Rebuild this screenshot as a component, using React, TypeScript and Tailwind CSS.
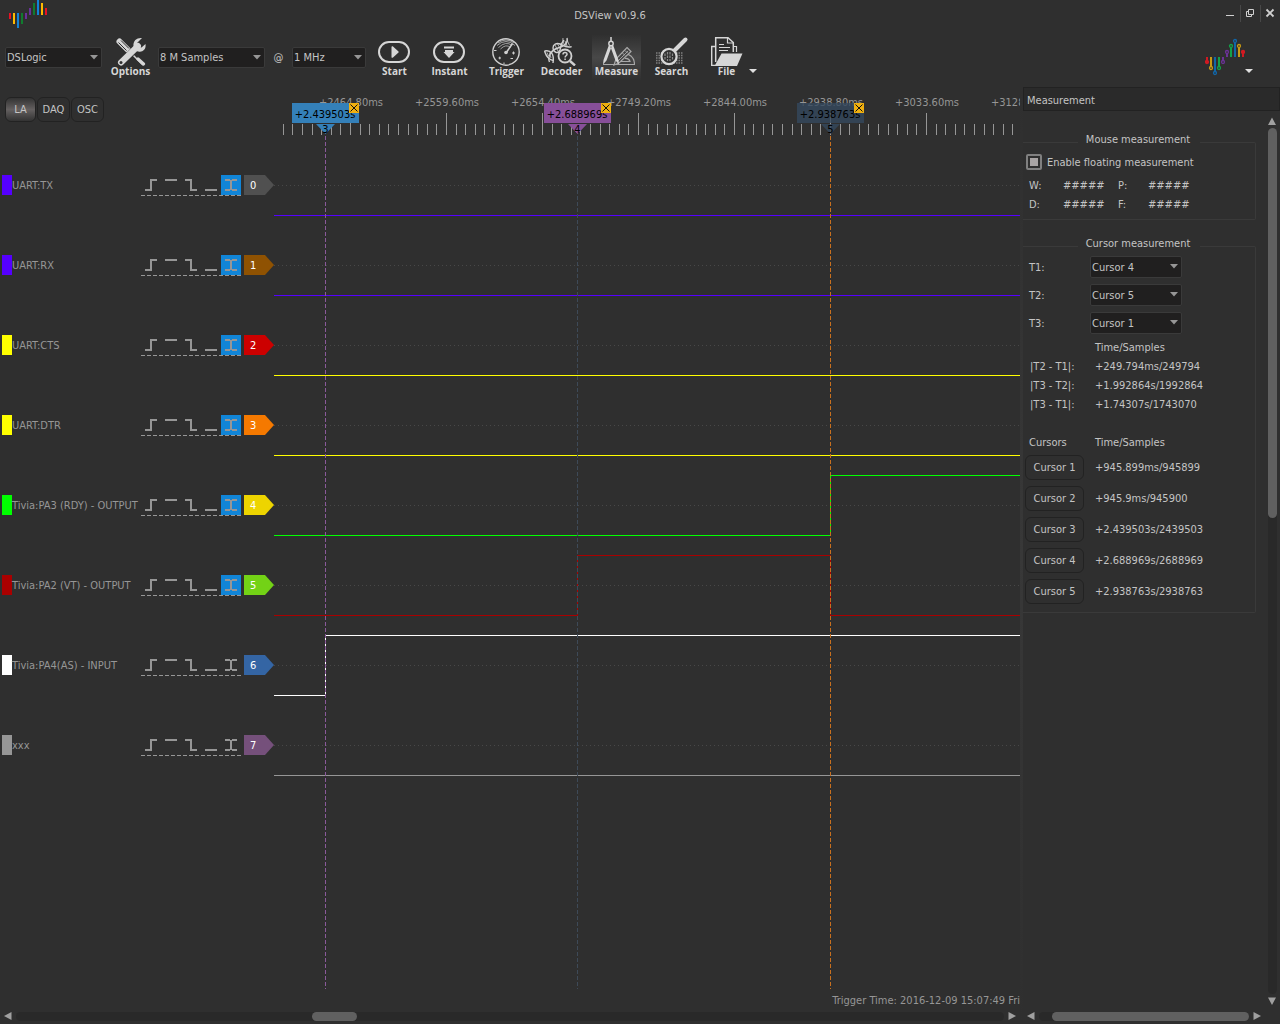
import React from "react";

type Channel = {
  id: number;
  name: string;
  swatch: string;
  tag: string;
  both: boolean;
  wave: [number, number][];
};

// Each wave is a list of [x, level] points: the level holds until the next point.
const CHANNELS: Channel[] = [
  { id: 0, name: "UART:TX", swatch: "#5500ff", tag: "#505050", both: true, wave: [[0, 0]] },
  { id: 1, name: "UART:RX", swatch: "#5500ff", tag: "#8f5202", both: true, wave: [[0, 0]] },
  { id: 2, name: "UART:CTS", swatch: "#ffff00", tag: "#cc0000", both: true, wave: [[0, 0]] },
  { id: 3, name: "UART:DTR", swatch: "#ffff00", tag: "#f57900", both: true, wave: [[0, 0]] },
  { id: 4, name: "Tivia:PA3 (RDY) - OUTPUT", swatch: "#00ff00", tag: "#edd400", both: true, wave: [[0, 0], [556, 1]] },
  { id: 5, name: "Tivia:PA2 (VT) - OUTPUT", swatch: "#aa0000", tag: "#73d216", both: true, wave: [[0, 0], [303, 1], [556, 0]] },
  { id: 6, name: "Tivia:PA4(AS) - INPUT", swatch: "#ffffff", tag: "#3465a4", both: false, wave: [[0, 0], [51, 1]] },
  { id: 7, name: "xxx", swatch: "#969696", tag: "#75507b", both: false, wave: [[0, 0]] },
];

const TICKS = ["+2464.80ms", "+2559.60ms", "+2654.40ms", "+2749.20ms", "+2844.00ms", "+2938.80ms", "+3033.60ms", "+3128.40ms"];

const FLAGS = [
  { id: 3, x: 51, text: "+2.439503s", fill: "#3480b9", line: "#8a5a9a", fade: 1 },
  { id: 4, x: 303, text: "+2.688969s", fill: "#874f99", line: "#3e4a58", fade: 1 },
  { id: 5, x: 556, text: "+2.938763s", fill: "#34495e", line: "#c8701f", fade: 0.8 },
];

const DELTAS = [
  ["|T2 - T1|:", "+249.794ms/249794"],
  ["|T3 - T2|:", "+1.992864s/1992864"],
  ["|T3 - T1|:", "+1.74307s/1743070"],
];

const CURSORS = [
  ["Cursor 1", "+945.899ms/945899"],
  ["Cursor 2", "+945.9ms/945900"],
  ["Cursor 3", "+2.439503s/2439503"],
  ["Cursor 4", "+2.688969s/2688969"],
  ["Cursor 5", "+2.938763s/2938763"],
];

function Select({ label, value, options, className }: { label: string; value: string; options: string[]; className: string }) {
  return (
    <div className={"relative shrink-0 " + className}>
      <select
        aria-label={label}
        defaultValue={value}
        className="block h-full w-full appearance-none rounded-xs border border-[#3a3a3a] bg-[#201f1f] pt-0.5 pl-px text-[11px] text-[#c4c4c4] outline-none"
      >
        {options.map((o) => (
          <option key={o}>{o}</option>
        ))}
      </select>
      <svg className="pointer-events-none absolute top-2 right-1" width="8" height="5" aria-hidden="true">
        <path d="M0 0H8L4 4.500Z" fill="#969696" />
      </svg>
    </div>
  );
}

function OptionsIcon() {
  return (
    <svg width="36" height="30" viewBox="0 0 36 30" fill="none" aria-hidden="true">
      <path d="M17 16L30 29" stroke="#d6d6d6" strokeWidth="1.500" />
      <path d="M25 23L30.500 28" stroke="#d6d6d6" strokeWidth="3.200" strokeLinecap="round" />
      <path d="M6.500 5.500L15 14" stroke="#d6d6d6" strokeWidth="6" strokeLinecap="round" />
      <path d="M5.500 6.500L13.500 14.500M8 4.500L16 12.500" stroke="#303030" strokeWidth="1" />
      <path d="M8.500 27L25 10" stroke="#303030" strokeWidth="7" />
      <path d="M8 26.500L25 10" stroke="#d6d6d6" strokeWidth="6" strokeLinecap="round" />
      <path d="M29 2C24 1.500 20 4.500 20.500 10C21 14 24 16.500 28 15.500C31.500 14.800 33 12 32.500 8L28.500 11.500L24.500 10.500L24 7Z" fill="#d6d6d6" />
      <circle cx="8" cy="26.500" r="1.500" fill="#303030" />
    </svg>
  );
}

function StartIcon() {
  return (
    <svg width="36" height="30" viewBox="0 0 36 30" fill="none" aria-hidden="true">
      <rect x="2" y="6" width="30" height="20" rx="10" stroke="#d6d6d6" strokeWidth="2" />
      <path d="M14.500 11C14.500 10 15.500 10 16 10.500L21.500 15.500Q22 16 21.500 16.500L16 21.500C15.500 22 14.500 22 14.500 21Z" fill="#d6d6d6" />
    </svg>
  );
}

function InstantIcon() {
  return (
    <svg width="36" height="30" viewBox="0 0 36 30" fill="none" aria-hidden="true">
      <rect x="2" y="6" width="30" height="20" rx="10" stroke="#d6d6d6" strokeWidth="2" />
      <path d="M12 10.500H22V12.500H12ZM13 14H21V16H22.500L17.500 21.500Q17 22 16.500 21.500L11.500 16H13Z" fill="#d6d6d6" />
    </svg>
  );
}

function TriggerIcon() {
  return (
    <svg width="36" height="30" viewBox="0 0 36 30" fill="none" stroke="#cfcfcf" aria-hidden="true">
      <circle cx="17" cy="16" r="13.200" strokeWidth="1.400" />
      <path d="M8 9.500Q17 1.500 26 9.500M9.500 11.500Q17 4.500 23 9.500M11.500 13Q17 7.500 21.500 11.500M9 7Q17 1 25 7" strokeWidth="0.700" />
      <path d="M17 17L23.500 7.500" strokeWidth="1.600" />
      <circle cx="17" cy="16.500" r="1.800" fill="#cfcfcf" stroke="none" />
      <path d="M5 14.500H7.500M23 17H26M24.500 15.500V18.500M9.500 22H12M10.700 20.700V23.300M21.500 22.500H24M15 28V26.500" strokeWidth="1" />
    </svg>
  );
}

function DecoderIcon() {
  return (
    <svg width="36" height="30" viewBox="0 0 36 30" fill="none" stroke="#d0d0d0" aria-hidden="true">
      <path d="M0.500 15C7 13.500 10.500 18 9 27M5.500 26C3 20 8 13.500 14 12C20 10.500 24.500 7 23 2" strokeWidth="1.400" />
      <path d="M0.500 15C2 20 5 24 9.500 24.500M9 12C9 8.500 12.500 6.500 16 8C20 10 24 12.500 27.500 10.500M9 12C9.500 16.500 14 18.500 16 14C17 10 17 7 20 4" strokeWidth="1.400" />
      <path d="M19 2C18 7 21 11 27.500 11M3 16.500L4.500 20M5.500 16.500L7 22M11 9L14 15M13.500 8L16.500 13M16 7.500L18 11M21 5L23 9.500M23 4L25.500 9.500" strokeWidth="0.800" />
      <circle cx="21" cy="20" r="6.500" fill="#303030" strokeWidth="1.800" />
      <path d="M26 25L31 29.500" strokeWidth="2.400" />
      <path d="M19 18.500Q19 16.500 21 16.500Q23.200 16.500 23 18.500C22.700 19.800 21.100 19.800 21.100 21.500M21.100 22.500V24" strokeWidth="1.500" />
    </svg>
  );
}

function MeasureIcon() {
  return (
    <svg width="36" height="30" viewBox="0 0 36 30" fill="none" aria-hidden="true">
      <path d="M17 28.500V27.500C19 20 25 15 32 20Q35.500 23 35.500 28.500ZM21 25.500H31Q30 22 26 22.500" stroke="#a8a8a8" strokeWidth="1.200" />
      <path d="M28 11.500L32 15.500L20 27L15 29L17 23Z" stroke="#a8a8a8" strokeWidth="1.200" fill="#444" />
      <path d="M17 23L26.500 13.500M19 25L29 15M26 14.500L28.500 17M23.500 17L26 19.500" stroke="#a8a8a8" strokeWidth="0.900" />
      <path d="M11 6L4.500 24L4 28.500L7.500 24.500L12.500 11ZM13 6L19.500 24L20 28.500L16.500 24.500L11.500 11Z" fill="#d6d6d6" />
      <circle cx="12" cy="7.500" r="2.200" stroke="#d6d6d6" strokeWidth="1.400" fill="#3c3c3c" />
      <path d="M12 1V5" stroke="#d6d6d6" strokeWidth="1.500" />
      <path d="M4 28.500H20" stroke="#a8a8a8" strokeWidth="1" />
    </svg>
  );
}

function SearchIcon() {
  return (
    <svg width="36" height="30" viewBox="0 0 36 30" fill="none" aria-hidden="true">
      <path d="M2 17H29M2 19.500H29M2 22H29M2 24.500H29M2 27H29" stroke="#808080" strokeWidth="1.400" strokeDasharray="1.500 1" />
      <path d="M20.500 14.500L31.500 3.500" stroke="#d6d6d6" strokeWidth="4" strokeLinecap="round" />
      <circle cx="15" cy="20.500" r="7.600" fill="#303030" stroke="#d6d6d6" strokeWidth="2.200" />
      <path d="M11 17.500V23.500M13.500 16V25M16 16V25M18.500 17.500V23.500" stroke="#8a8a8a" strokeWidth="1.200" strokeDasharray="2.500 1" />
    </svg>
  );
}

function FileIcon() {
  return (
    <svg width="36" height="30" viewBox="0 0 36 30" fill="none" stroke="#d6d6d6" aria-hidden="true">
      <path d="M6 10.500H2.700V29.500H6" strokeWidth="1.400" />
      <path d="M6.700 26V1.700H19L24.300 6.500V16" strokeWidth="1.500" />
      <path d="M18.500 1.500V7H24.500" strokeWidth="1.200" />
      <path d="M10 8.500H15M10 11.500H21M10 14.500H19" strokeWidth="1.200" />
      <path d="M5.500 30L12.500 17.500H33.500L28 30Z" fill="#d6d6d6" stroke="none" />
      <path d="M25 10.500H27.500V16" strokeWidth="1.200" />
    </svg>
  );
}

function ToolButton({ label, active, children }: { label: string; active?: boolean; children: React.ReactNode }) {
  return (
    <button
      type="button"
      className={
        "flex w-[49px] shrink-0 flex-col items-center pt-px pb-1 font-['Open_Sans',sans-serif] text-[10px] leading-[10px] font-bold text-[#d6d6d6] " +
        (active ? "bg-linear-to-b from-[#303030] via-[#484848] to-[#303030]" : "")
      }
    >
      {children}
      <span>{label}</span>
    </button>
  );
}

function TitleLogo() {
  const bars: [number, number, string][] = [
    [13, 6, "#e81123"], [13, 11, "#ffb900"], [13, 15, "#1283d8"], [13, 11, "#107c2e"], [13, 6, "#69309a"],
    [8, 7, "#69309a"], [3, 12, "#107c2e"], [0, 15, "#1283d8"], [3, 12, "#ffb900"], [8, 7, "#e81123"],
  ];
  return (
    <svg className="w-12 shrink-0" height="28" aria-hidden="true">
      {bars.map(([y, h, c], i) => (
        <rect key={i} x={9 + i * 4} y={y} width="2" height={h} fill={c} />
      ))}
    </svg>
  );
}

function BrandLogo() {
  const pins: [number, number, string, boolean][] = [
    [2, 24, "#d01a22", true], [6, 30, "#c99a13", false], [10, 35, "#1166a8", false], [14, 30, "#14a04a", false], [18, 24, "#6b3296", false],
    [22, 14, "#6b3296", false], [26, 8, "#14a04a", false], [30, 3, "#1166a8", false], [34, 8, "#c99a13", false], [38, 14, "#d01a22", true],
  ];
  return (
    <svg className="mb-px" width="40" height="38" aria-hidden="true">
      {pins.map(([x, y, c, solid], i) => (
        <g key={i} stroke={c}>
          <path d={`M${x} 19V${y}`} strokeWidth="2" />
          <circle cx={x} cy={y} r="1.500" fill={solid ? c : "#303030"} strokeWidth="1.300" />
        </g>
      ))}
    </svg>
  );
}

function ChannelRow({ ch }: { ch: Channel }) {
  const edges = [
    ["Rising edge", "M4 15H10V5H16"],
    ["High level", "M4 5H16"],
    ["Falling edge", "M4 5H10V15H16"],
    ["Low level", "M4 15H16"],
    ["Either edge", "M4 5H9M11 5H16M10 5V15M4 15H9M11 15H16"],
  ];
  return (
    <div className="flex h-20 items-center pl-0.5">
      <span className="h-5 w-2.5 shrink-0" style={{ background: ch.swatch }} />
      <span className="flex-1 pt-0.5 whitespace-nowrap text-[#969696]">{ch.name}</span>
      <div className="relative flex">
        {edges.map(([label, d], i) => (
          <button key={label} type="button" aria-label={label} className={"size-5 " + (i === 4 && ch.both ? "bg-[#1185d7]" : "")}>
            <svg width="20" height="20" fill="none" stroke="#969696" strokeWidth="2">
              <path d={d} />
            </svg>
          </button>
        ))}
        <svg className="absolute top-5 left-0" width="100" height="1" aria-hidden="true">
          <path d="M0 .5H100" stroke="#969696" strokeDasharray="4 2" />
        </svg>
      </div>
      <span
        className="ml-[3px] flex h-5 w-[30px] items-center pt-0.5 pl-1.5 text-[#ffffff] [clip-path:polygon(0_0,70%_0,100%_50%,70%_100%,0_100%)]"
        style={{ background: ch.tag }}
      >
        {ch.id}
      </span>
    </div>
  );
}

function wavePath(points: [number, number][], mid: number) {
  const y = (level: number) => mid + (level ? -30 : 30) + 0.5;
  let d = `M0 ${y(points[0][1])}`;
  points.slice(1).forEach(([x, level]) => {
    d += `H${x + 0.5}V${y(level)}`;
  });
  return d + "H4000";
}

function Plot() {
  const minor = Array.from({ length: 78 }, (_, i) => Math.round(8.8 + i * 9.6)).filter((x) => x < 746);
  return (
    <svg className="absolute inset-0 h-full w-full text-[11px]" aria-label="Logic waveforms">
      {TICKS.map((t, i) => (
        <g key={t}>
          <text x={77 + i * 96} y="20" textAnchor="middle" fill="#969696">{t}</text>
          <path d={`M${76.5 + i * 96} 27V49`} stroke="#969696" />
        </g>
      ))}
      {minor.map((x) => (
        <path key={x} d={`M${x + 0.5} 38V49`} stroke="#969696" />
      ))}
      {CHANNELS.map((ch) => {
        const mid = 99 + ch.id * 80;
        return (
          <g key={ch.id} fill="none">
            <path d={`M0 ${mid + 0.5}H4000`} stroke="#484848" strokeDasharray="1 3" />
            <path d={wavePath(ch.wave, mid)} stroke={ch.swatch} />
          </g>
        );
      })}
      {FLAGS.map((f) => (
        <g key={f.id}>
          <path d={`M${f.x + 0.5} 50V903`} stroke={f.line} strokeDasharray="4 2" />
          <path d={`M${f.x - 33} 17h67v20h-67ZM${f.x - 9} 38h19l-9.500 10Z`} fill={f.fill} fillOpacity={f.fade} />
          <text x={f.x} y="32" textAnchor="middle" fill="#000">{f.text}</text>
          <text x={f.x + 0.5} y="47" textAnchor="middle" fill="#000">{f.id}</text>
          <rect x={f.x + 24} y="17" width="10" height="10" fill="#f0b010" />
          <path d={`M${f.x + 25.5} 18.500l7 7m0 -7l-7 7`} stroke="#111" />
        </g>
      ))}
    </svg>
  );
}

function Arrow({ d }: { d: string }) {
  return (
    <svg width="8" height="8" className="shrink-0" aria-hidden="true">
      <path d={d} fill="#a0a0a0" />
    </svg>
  );
}

function HScroll({ thumb, className }: { thumb: string; className: string }) {
  return (
    <div className={"flex h-4 items-center gap-1 " + className}>
      <Arrow d="M7.500 0V8L0 4Z" />
      <div className="flex h-[9px] flex-1 rounded-full bg-[#292929]">
        <div className={"h-[9px] rounded-full bg-[#606060] " + thumb} />
      </div>
      <Arrow d="M0.500 0V8L8 4Z" />
    </div>
  );
}

function Group({ title, children, className }: { title: string; children: React.ReactNode; className: string }) {
  return (
    <fieldset className={"min-w-0 rounded-r-xs border border-l-0 border-[#3a3a3a] " + className}>
      <legend className="mx-auto h-5 w-[122px] pt-px pr-0.5 text-center leading-[14px]">{title}</legend>
      {children}
    </fieldset>
  );
}

function MeasurementDock() {
  const cursorNames = CURSORS.map((c) => c[0]);
  return (
    <aside className="flex w-[257px] shrink-0 flex-col text-[#c4c4c4]">
      <h2 className="mt-px h-6 border border-[#222] bg-[#2a2a2a] pt-px pl-[3px] leading-[24px]">Measurement</h2>
      <div className="flex min-h-0 flex-1">
        <div className="mt-[21px] w-[233px]">
          <Group title="Mouse measurement" className="h-[88px]">
            <label className="flex h-[19px] items-center gap-[5px] pl-[3px]">
              <input
                type="checkbox"
                defaultChecked
                className="size-4 appearance-none rounded-xs border-2 border-[#808080] bg-[#2a2a2a] p-0.5 checked:bg-[#a8a4a4] checked:bg-clip-content"
              />
              <span className="pt-0.5">Enable floating measurement</span>
            </label>
            <dl className="mt-[5px] grid grid-cols-[34px_55px_30px_auto] pl-1.5 leading-[19px]">
              <dt>W:</dt>
              <dd>#####</dd>
              <dt>P:</dt>
              <dd>#####</dd>
              <dt>D:</dt>
              <dd>#####</dd>
              <dt>F:</dt>
              <dd>#####</dd>
            </dl>
          </Group>
          <Group title="Cursor measurement" className="mt-4 h-[377px]">
            <div className="flex flex-col gap-1.5 pl-1.5">
              {[["T1:", "Cursor 4"], ["T2:", "Cursor 5"], ["T3:", "Cursor 1"]].map(([t, v]) => (
                <div key={t} className="flex h-[22px] items-center">
                  <span className="w-[61px] pt-0.5">{t}</span>
                  <Select label={t} value={v} options={cursorNames} className="h-[22px] w-[92px]" />
                </div>
              ))}
            </div>
            <table className="mt-1 ml-[7px] leading-[19px]">
              <thead>
                <tr>
                  <th className="w-[65px] p-0"></th>
                  <th className="p-0 text-left font-normal">Time/Samples</th>
                </tr>
              </thead>
              <tbody>
                {DELTAS.map(([k, v]) => (
                  <tr key={k}>
                    <td className="p-0">{k}</td>
                    <td className="p-0">{v}</td>
                  </tr>
                ))}
              </tbody>
            </table>
            <table className="mt-[19px] ml-0.5">
              <thead>
                <tr className="h-[19px]">
                  <th className="w-[70px] p-0 pl-1 text-left font-normal">Cursors</th>
                  <th className="p-0 text-left font-normal">Time/Samples</th>
                </tr>
              </thead>
              <tbody>
                {CURSORS.map(([k, v]) => (
                  <tr key={k} className="h-[31px]">
                    <td className="p-0">
                      <button type="button" className="block h-[25px] w-[59px] rounded-md border border-[#222]">{k}</button>
                    </td>
                    <td className="p-0">{v}</td>
                  </tr>
                ))}
              </tbody>
            </table>
          </Group>
        </div>
        <div className="mt-1.5 mr-[3px] ml-auto flex w-2.5 flex-col items-center gap-[3px] pb-[3px]">
          <Arrow d="M0 8H8L4 0.500Z" />
          <div className="w-[9px] flex-1 rounded-full bg-[#292929]">
            <div className="h-[45%] rounded-full bg-[#606060]" />
          </div>
          <Arrow d="M0 0.500H8L4 8Z" />
        </div>
      </div>
      <HScroll className="mr-[19px] ml-1" thumb="ml-[6%] w-[94%]" />
    </aside>
  );
}

export default function App() {
  return (
    <div className="flex min-h-screen flex-col overflow-hidden bg-[#2f2f2f] font-['DejaVu_Sans_Condensed','DejaVu_Sans',sans-serif] text-[11px] leading-[14px] text-[#c4c4c4]">
      <header className="flex h-7">
        <TitleLogo />
        <h1 className="mr-12 flex-1 pt-[9px] text-center">DSView v0.9.6</h1>
        <div className="flex w-[60px] text-[#d0d0d0]">
          <button type="button" aria-label="Minimize" className="w-5">
            <svg width="20" height="28"><path d="M6 15.500H14" stroke="currentColor" /></svg>
          </button>
          <button type="button" aria-label="Restore" className="w-5">
            <svg width="20" height="28" fill="none" stroke="currentColor">
              <path d="M.5 5V22" stroke="#484848" />
              <path d="M8.500 9.500H13.500V14.500H8.500ZM8.500 11.500H6.500V16.500H11.500V14.500" />
            </svg>
          </button>
          <button type="button" aria-label="Close" className="w-5">
            <svg width="20" height="28" stroke="currentColor">
              <path d="M.5 5V22" stroke="#484848" />
              <path d="M6.500 9.500L13.500 16.500M13.500 9.500L6.500 16.500" strokeWidth="1.800" />
            </svg>
          </button>
        </div>
      </header>

      <div className="flex h-[58px] items-center pl-[5px]">
        <Select label="Device" value="DSLogic" options={["DSLogic", "Demo Device"]} className="h-[21px] w-[97px]" />
        <div className="mr-[3px] ml-1 flex">
          <ToolButton label="Options"><OptionsIcon /></ToolButton>
        </div>
        <Select label="Sample count" value="8 M Samples" options={["8 M Samples", "16 M Samples"]} className="h-[21px] w-[107px]" />
        <span className="w-[27px] pt-0.5 text-center">@</span>
        <Select label="Sample rate" value="1 MHz" options={["1 MHz", "2 MHz"]} className="h-[21px] w-[74px]" />
        <div className="ml-1 flex gap-2">
          <div className="flex gap-1.5">
            <ToolButton label="Start"><StartIcon /></ToolButton>
            <ToolButton label="Instant"><InstantIcon /></ToolButton>
          </div>
          <div className="flex gap-1.5">
            <ToolButton label="Trigger"><TriggerIcon /></ToolButton>
            <ToolButton label="Decoder"><DecoderIcon /></ToolButton>
            <ToolButton label="Measure" active><MeasureIcon /></ToolButton>
            <ToolButton label="Search"><SearchIcon /></ToolButton>
            <ToolButton label="File"><FileIcon /></ToolButton>
          </div>
        </div>
        <button type="button" aria-label="File menu" className="-ml-0.5 pt-7">
          <svg width="8" height="5"><path d="M0 0H8L4 4Z" fill="#e0e0e0" /></svg>
        </button>
        <button type="button" aria-label="About" className="mr-[27px] ml-auto flex items-end">
          <BrandLogo />
          <svg className="mb-[3px]" width="8" height="5"><path d="M0 0H8L4 4Z" fill="#e0e0e0" /></svg>
        </button>
      </div>

      <main className="flex flex-1">
        <section className="flex min-w-0 flex-1 flex-col">
          <div className="flex flex-1">
            <div className="w-[274px] shrink-0">
              <div className="flex h-[59px] gap-px pt-[11px] pl-[5px]">
                <button type="button" className="h-[25px] w-[31px] rounded-md border border-[#222] bg-linear-to-b from-[#333] via-[#646060] to-[#333] pt-px">LA</button>
                <button type="button" className="h-[25px] w-[33px] rounded-md border border-[#222] pt-px">DAQ</button>
                <button type="button" className="h-[25px] w-[33px] rounded-md border border-[#222] pt-px">OSC</button>
              </div>
              {CHANNELS.map((ch) => (
                <ChannelRow key={ch.id} ch={ch} />
              ))}
            </div>
            <div className="relative flex min-w-0 flex-1 items-end justify-end overflow-hidden">
              <Plot />
              <p className="whitespace-nowrap text-[#969696]">Trigger Time: 2016-12-09 15:07:49 Fri</p>
            </div>
          </div>
          <HScroll className="pr-1 pl-1" thumb="ml-[30%] w-[45px]" />
        </section>
        <div className="w-[3px] bg-linear-to-b from-[#2f2f2f] via-[#383838] to-[#2f2f2f]" />
        <MeasurementDock />
      </main>
    </div>
  );
}
